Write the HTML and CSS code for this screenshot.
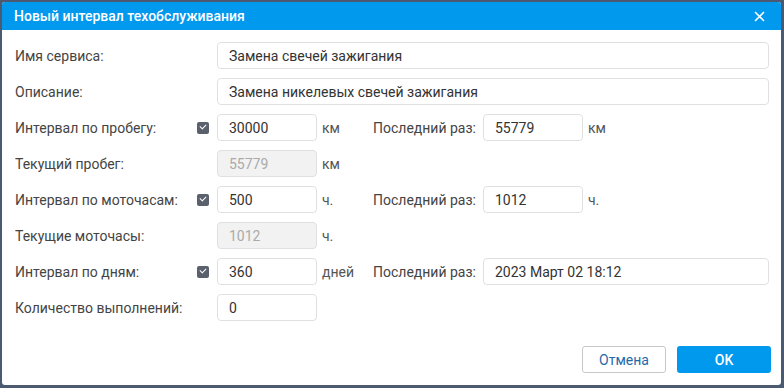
FILE: index.html
```html
<!DOCTYPE html>
<html lang="ru">
<head>
    <meta charset="UTF-8">
    <title>Новый интервал техобслуживания</title>
    <link rel="stylesheet" href="styles.css">
</head>
<body>
    <div class="dialog">
        <div class="dialog-head">
            <span class="dialog-title">Новый интервал техобслуживания</span>
            <svg class="close" width="11" height="11" viewBox="0 0 11 11">
                <path d="M1 1 L10 10 M10 1 L1 10" stroke="#fff" stroke-width="1.6" fill="none"/>
            </svg>
        </div>
        <div class="form">
            <div class="label">Имя сервиса:</div>
            <span></span>
            <input class="field wide" type="text" value="Замена свечей зажигания">

            <div class="label">Описание:</div>
            <span></span>
            <input class="field wide" type="text" value="Замена никелевых свечей зажигания">

            <div class="label">Интервал по пробегу:</div>
            <span class="check"></span>
            <input class="field" type="text" value="30000">
            <div class="unit">км</div>
            <div class="label">Последний раз:</div>
            <input class="field" type="text" value="55779">
            <div class="unit">км</div>

            <div class="label">Текущий пробег:</div>
            <span></span>
            <input class="field" type="text" value="55779" disabled>
            <div class="unit">км</div>
            <div class="rest"></div>

            <div class="label">Интервал по моточасам:</div>
            <span class="check"></span>
            <input class="field" type="text" value="500">
            <div class="unit">ч.</div>
            <div class="label">Последний раз:</div>
            <input class="field" type="text" value="1012">
            <div class="unit">ч.</div>

            <div class="label">Текущие моточасы:</div>
            <span></span>
            <input class="field" type="text" value="1012" disabled>
            <div class="unit">ч.</div>
            <div class="rest"></div>

            <div class="label">Интервал по дням:</div>
            <span class="check"></span>
            <input class="field" type="text" value="360">
            <div class="unit">дней</div>
            <div class="label">Последний раз:</div>
            <input class="field date" type="text" value="2023 Март 02 18:12">

            <div class="label">Количество выполнений:</div>
            <span></span>
            <input class="field" type="text" value="0">
            <div class="rest wide-rest"></div>
        </div>
        <div class="footer">
            <button class="btn cancel">Отмена</button>
            <button class="btn ok">OK</button>
        </div>
    </div>
</body>
</html>
```

FILE: styles.css
```css
body {
    margin: 0;
    padding: 2px;
    background-color: #4b5a70;
    font-family: Roboto, "Noto Sans", sans-serif;
    font-size: 14px;
}

.dialog {
    width: 779px;
    height: 383px;
    background-color: #fff;
    border-radius: 3px;
    overflow: hidden;
    display: flex;
    flex-direction: column;
}

.dialog-head {
    height: 28px;
    background-color: #0099ee;
    display: flex;
    align-items: center;
    justify-content: space-between;
    padding: 0 16px 0 12px;
}

.dialog-title {
    color: #fff;
    font-size: 14px;
    font-weight: 500;
}

.close {
    display: block;
}

.form {
    display: grid;
    grid-template-columns: 182px 20px 100px 56px 110px 100px 1fr;
    grid-auto-rows: 27px;
    row-gap: 9px;
    align-items: center;
    padding: 12px 12px 0 13px;
}

.label {
    color: #444;
}

.unit {
    color: #555;
    padding-left: 5px;
}

.field {
    box-sizing: border-box;
    height: 27px;
    width: 100px;
    border: 1px solid #e0e0e0;
    border-radius: 4px;
    padding: 0 11px;
    font-family: Roboto, "Noto Sans", sans-serif;
    font-size: 14px;
    color: #333;
    background-color: #fff;
    outline: none;
}

.field:disabled {
    background-color: #f2f2f2;
    color: #aaa;
}

.wide {
    grid-column: 3 / 8;
    width: 100%;
}

.date {
    grid-column: 6 / 8;
    width: 100%;
}

.rest {
    grid-column: 5 / 8;
}

.check {
    width: 12px;
    height: 12px;
    border-radius: 2px;
    background-color: #5a606c;
    position: relative;
}

.check::after {
    content: "";
    position: absolute;
    left: 3px;
    top: 2px;
    width: 5px;
    height: 3px;
    border-left: 1.5px solid #fff;
    border-bottom: 1.5px solid #fff;
    transform: rotate(-45deg);
}

.footer {
    margin-top: auto;
    display: flex;
    justify-content: flex-end;
    gap: 11px;
    padding: 0 10px 12px 0;
}

.btn {
    height: 27px;
    border-radius: 3px;
    font-family: Roboto, "Noto Sans", sans-serif;
    font-size: 14px;
    cursor: pointer;
}

.cancel {
    width: 84px;
    background-color: #fff;
    border: 1px solid #c8c8c8;
    color: #1f6aa8;
}

.ok {
    width: 94px;
    background-color: #0099ee;
    border: none;
    color: #fff;
    font-weight: 500;
}
```
